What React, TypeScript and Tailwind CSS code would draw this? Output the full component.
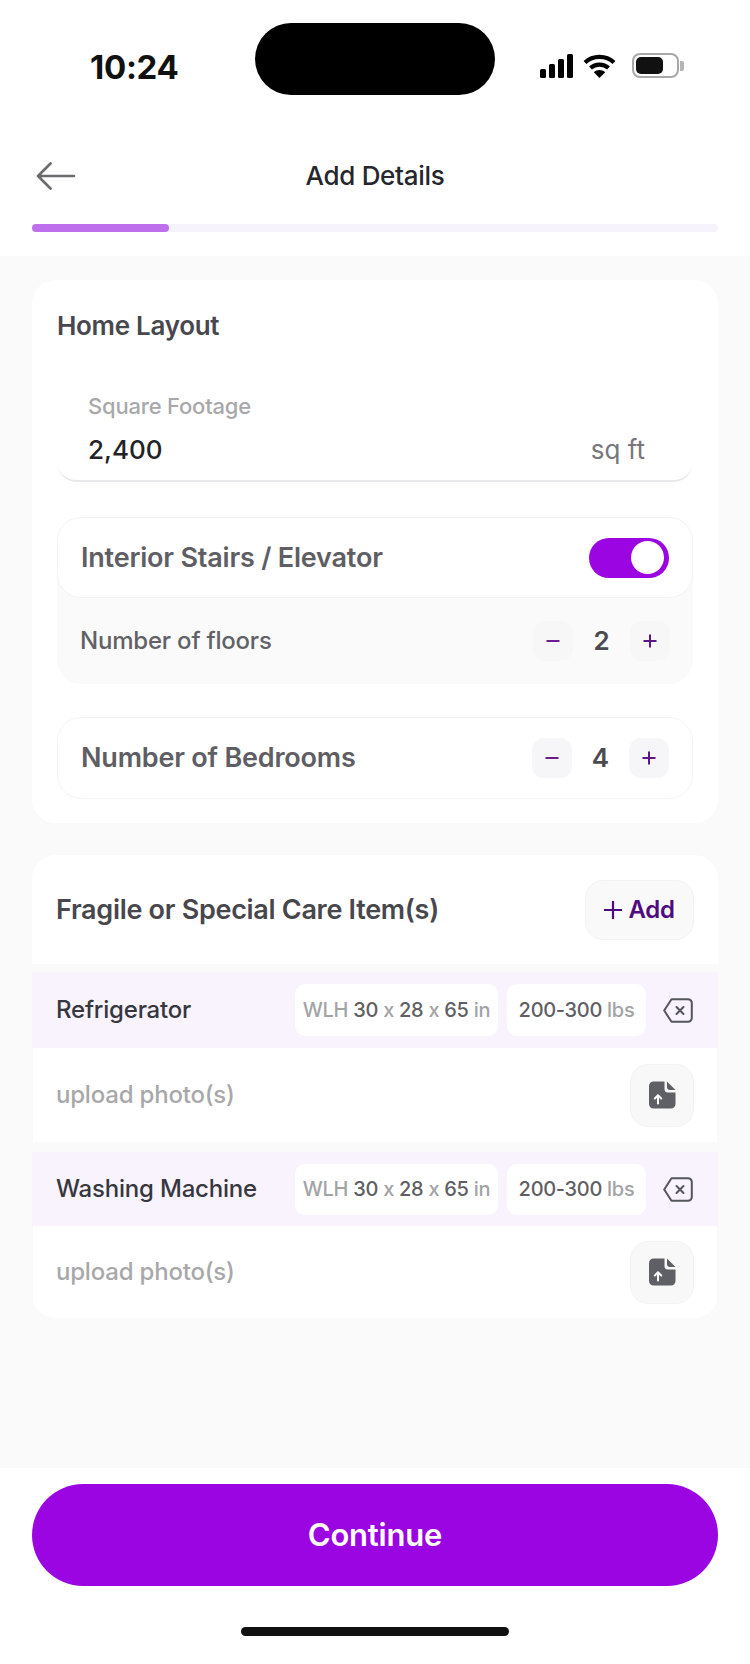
import React from "react";

const font = { fontFamily: "Inter, 'Noto Sans', sans-serif" };

function Stepper({ value, small }: { value: string; small?: boolean }) {
  const btn = `w-[40px] h-[40px] rounded-[12px] flex items-center justify-center ${small ? "bg-[#f7f7f7]" : "bg-[#f6f5f7]"}`;
  return (
    <div className="flex items-center">
      <div className={btn}>
        <svg width="16" height="16" viewBox="0 0 16 16"><path d="M1.5 8h13" stroke="#6b1f8f" strokeWidth="2" /></svg>
      </div>
      <div className="w-[57px] text-center text-[26px] leading-[32px] font-semibold text-[#4a4a50]">{value}</div>
      <div className={btn}>
        <svg width="16" height="16" viewBox="0 0 16 16"><path d="M1.5 8h13M8 1.5v13" stroke="#5f1487" strokeWidth="2" /></svg>
      </div>
    </div>
  );
}

function DeleteIcon() {
  return (
    <svg width="30" height="25" viewBox="0 0 30 25" fill="none">
      <path d="M8.5 1.2H25a3.8 3.8 0 0 1 3.8 3.8v15a3.8 3.8 0 0 1-3.8 3.8H8.5L1.2 12.5Z" stroke="#55555b" strokeWidth="2" strokeLinejoin="round" />
      <path d="M13.5 9l7 7M20.5 9l-7 7" stroke="#55555b" strokeWidth="2" strokeLinecap="round" />
    </svg>
  );
}

function UploadIcon() {
  return (
    <svg width="27" height="28" viewBox="0 0 27 28" fill="none">
      <path d="M4.5 0.5H15.5V8a3.5 3.5 0 0 0 3.5 3.5H26.5V23a4.5 4.5 0 0 1-4.5 4.5H4.5A4.5 4.5 0 0 1 0 23V5A4.5 4.5 0 0 1 4.5 0.5Z" fill="#5f5f66" />
      <path d="M18 0.5 26.5 9H21a3 3 0 0 1-3-3Z" fill="#5f5f66" />
      <path d="M9 22.5v-8M5.8 17.5 9 14.2l3.2 3.3" stroke="#fff" strokeWidth="2" strokeLinecap="round" strokeLinejoin="round" />
    </svg>
  );
}

function Item({ name, rowClass, chipClass, bottomClass }: { name: string; rowClass: string; chipClass: string; bottomClass: string }) {
  return (
    <div>
      <div className={`flex items-center bg-[#f8f3fd] pl-[24px] pr-[25px] ${rowClass}`}>
        <div className="flex-1 text-[24px] leading-[32px] font-medium text-[#37373f] tracking-[-0.2px]">{name}</div>
        <div className={`w-[203px] flex items-center justify-center bg-white rounded-[10px] text-[20px] font-medium text-[#a3a3a6] tracking-[-0.3px] ${chipClass}`}>
          <span>WLH&nbsp;</span><span className="text-[#5f5f64]">30</span><span>&nbsp;x&nbsp;</span><span className="text-[#5f5f64]">28</span><span>&nbsp;x&nbsp;</span><span className="text-[#5f5f64]">65</span><span>&nbsp;in</span>
        </div>
        <div className={`w-[139px] ml-[9px] flex items-center justify-center bg-white rounded-[10px] text-[20px] font-medium text-[#a3a3a6] tracking-[-0.3px] ${chipClass}`}>
          <span className="text-[#5f5f64]">200-300</span><span>&nbsp;lbs</span>
        </div>
        <div className="ml-[17px] flex"><DeleteIcon /></div>
      </div>
      <div className={`flex items-center justify-between bg-white mx-[1px] pl-[23px] pr-[23px] ${bottomClass}`}>
        <div className="text-[24px] leading-[32px] font-medium text-[#a8a8aa] tracking-[-0.2px]">upload photo(s)</div>
        <div className="w-[64px] h-[63px] rounded-[18px] bg-[#f8f8f8] border border-[#f3f3f3] flex items-center justify-center">
          <UploadIcon />
        </div>
      </div>
    </div>
  );
}

export default function App() {
  return (
    <div className="w-[750px] h-[1664px] flex flex-col bg-white overflow-hidden" style={font}>
      <div className="h-[256px] shrink-0 flex flex-col">
        <div className="flex items-start pt-[23px] h-[150px]">
          <div className="ml-[90px] w-[165px] mt-[25px] text-[33px] leading-[38px] font-bold text-[#111] tracking-[-0.3px]">10:24</div>
          <div className="w-[240px] h-[72px] bg-black rounded-[36px]"></div>
          <div className="ml-[45px] mt-[30px] flex items-center">
            <svg width="33" height="24" viewBox="0 0 33 24" fill="#000">
              <rect x="0" y="15" width="6" height="9" rx="1.5" />
              <rect x="9" y="10" width="6" height="14" rx="1.5" />
              <rect x="18" y="5" width="6" height="19" rx="1.5" />
              <rect x="27" y="0" width="6" height="24" rx="1.5" />
            </svg>
            <svg className="ml-[10px]" width="33" height="24" viewBox="0 0 33 24" fill="none">
              <path d="M2 8.5C10 1 23 1 31 8.5" stroke="#000" strokeWidth="4.2" />
              <path d="M7.5 14C12.5 9.5 20.5 9.5 25.5 14" stroke="#000" strokeWidth="4.2" />
              <path d="M16.5 24 10.8 18.2C14 15.3 19 15.3 22.2 18.2Z" fill="#000" />
            </svg>
            <div className="ml-[16px] w-[47px] h-[25px] rounded-[8px] border-2 border-[#a8a8a8] p-[2px] flex">
              <div className="w-[27px] h-full rounded-[5px] bg-[#111]"></div>
            </div>
            <div className="w-[4px] h-[10px] ml-[1px] rounded-r-[2px] bg-[#b5b5b5]"></div>
          </div>
        </div>
        <div className="h-[52px] flex items-center relative pl-[36px]">
          <svg width="40" height="28" viewBox="0 0 40 28" fill="none">
            <path d="M38 14H2M14.5 1.5 2 14l12.5 12.5" stroke="#6b6b6f" strokeWidth="2.6" strokeLinecap="round" strokeLinejoin="round" />
          </svg>
          <div className="flex-1 text-center pr-[76px] text-[26px] leading-[32px] font-medium text-[#26262d] tracking-[-0.3px]">Add Details</div>
        </div>
        <div className="mt-[22px] mx-[32px] h-[8px] rounded-full bg-[#f7f3fd]">
          <div className="w-[137px] h-full rounded-full bg-[#bd6fec]"></div>
        </div>
      </div>

      <div className="flex-1 bg-[#fafafa] px-[32px] pt-[24px]">
        <div className="bg-white rounded-[24px] px-[25px] pt-[30px] pb-[24px]">
          <div className="text-[26px] leading-[32px] font-semibold text-[#47474d] tracking-[-0.3px]">Home Layout</div>
          <div className="mt-[30px] h-[110px] rounded-[20px] border-b-2 border-[#e9e9eb] px-[31px] pt-[20px]">
            <div className="text-[22px] leading-[28px] font-medium text-[#a8a8aa] tracking-[-0.2px]">Square Footage</div>
            <div className="mt-[14px] flex items-center justify-between text-[26px] leading-[32px]">
              <span className="font-medium text-[#222227]">2,400</span>
              <span className="text-[#77777b] pr-[17px]">sq ft</span>
            </div>
          </div>
          <div className="mt-[35px] rounded-[24px] bg-[#fafafa]">
            <div className="h-[81px] bg-white rounded-[24px] border border-[#f4f4f5] flex items-center justify-between pl-[23px] pr-[23px]">
              <div className="text-[27px] leading-[34px] font-semibold text-[#5e5e64] tracking-[-0.2px]">Interior Stairs / Elevator</div>
              <div className="w-[80px] h-[40px] rounded-full bg-[#9a05e2] flex items-center justify-end pr-[5px]">
                <div className="w-[33px] h-[33px] rounded-full bg-white"></div>
              </div>
            </div>
            <div className="h-[86px] flex items-center justify-between pl-[23px] pr-[23px]">
              <div className="text-[24px] leading-[32px] font-medium text-[#616166] tracking-[-0.2px]">Number of floors</div>
              <Stepper value="2" small />
            </div>
          </div>
          <div className="mt-[33px] h-[82px] rounded-[24px] border border-[#f4f4f5] flex items-center justify-between pl-[23px] pr-[23px]">
            <div className="text-[27px] leading-[34px] font-semibold text-[#5e5e64] tracking-[-0.2px]">Number of Bedrooms</div>
            <Stepper value="4" />
          </div>
        </div>

        <div className="mt-[32px]">
          <div className="h-[109px] bg-white rounded-t-[24px] flex items-center justify-between pl-[24px] pr-[24px]">
            <div className="text-[27px] leading-[34px] font-semibold text-[#47474d] tracking-[-0.3px]">Fragile or Special Care Item(s)</div>
            <div className="w-[109px] h-[60px] rounded-[18px] bg-[#f9f9f9] border border-[#f3f3f3] flex items-center justify-center gap-[6px] text-[24px] font-semibold text-[#4f0a80] tracking-[-0.3px]">
              <svg width="18" height="18" viewBox="0 0 18 18"><path d="M0 9h18M9 0v18" stroke="#4f0a80" strokeWidth="2.2" /></svg>
              <span>Add</span>
            </div>
          </div>
          <div className="mt-[8px]">
            <Item name="Refrigerator" rowClass="h-[76px]" chipClass="h-[52px]" bottomClass="h-[94px]" />
          </div>
          <div className="mt-[10px] rounded-b-[24px] overflow-hidden">
            <Item name="Washing Machine" rowClass="h-[74px]" chipClass="h-[51px]" bottomClass="h-[92px]" />
          </div>
        </div>
      </div>

      <div className="h-[196px] shrink-0 bg-white px-[32px] pt-[16px]">
        <div className="h-[102px] rounded-[51px] bg-[#9a05e2] flex items-center justify-center text-[31px] font-semibold text-white tracking-[-0.2px]">Continue</div>
        <div className="mt-[41px] mx-auto w-[268px] h-[9px] rounded-full bg-[#111]"></div>
      </div>
    </div>
  );
}
